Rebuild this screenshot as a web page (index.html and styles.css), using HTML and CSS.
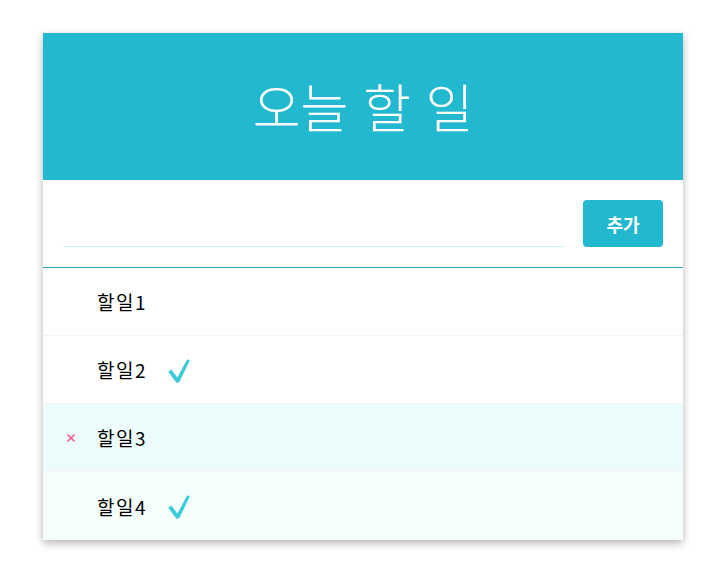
FILE: index.html
```html
<!DOCTYPE html>
<html lang="ko">
<head>
<meta charset="utf-8">
<title>오늘 할 일</title>
<link rel="stylesheet" href="styles.css">
</head>
<body>
<main class="page">
  <section class="todo">
    <header class="todo-title">오늘 할 일</header>
    <form class="todo-form">
      <input class="todo-input" type="text" value="">
      <button class="todo-add" type="button">추가</button>
    </form>
    <ul class="todo-list">
      <li class="todo-item">
        <span class="todo-remove"></span>
        <span class="todo-text">할일1</span>
      </li>
      <li class="todo-item">
        <span class="todo-remove"></span>
        <span class="todo-text">할일2</span>
        <svg class="todo-check" width="22" height="24" viewBox="0 0 22 24"><path d="M0.3 12.9 L3.2 10.6 L9.4 18.6 L19.2 0.3 L21.8 1.6 L11.2 23.2 L8.6 23.8 Z" fill="#3bc9db"/></svg>
      </li>
      <li class="todo-item is-hover">
        <span class="todo-remove"><svg width="8" height="8" viewBox="0 0 8 8"><path d="M0.5 0.5 L7.5 7.5 M7.5 0.5 L0.5 7.5" stroke="#f06595" stroke-width="1.6"/></svg></span>
        <span class="todo-text">할일3</span>
      </li>
      <li class="todo-item is-alt">
        <span class="todo-remove"></span>
        <span class="todo-text">할일4</span>
        <svg class="todo-check" width="22" height="24" viewBox="0 0 22 24"><path d="M0.3 12.9 L3.2 10.6 L9.4 18.6 L19.2 0.3 L21.8 1.6 L11.2 23.2 L8.6 23.8 Z" fill="#3bc9db"/></svg>
      </li>
    </ul>
  </section>
</main>
</body>
</html>
```

FILE: styles.css
```css
* { box-sizing: border-box; }
html, body { margin: 0; background: #ffffff; }
body { font-family: "Noto Sans CJK KR", "Noto Sans", sans-serif; color: #000; }
.page { padding: 33px 0 40px 43px; }
.todo {
  width: 640px;
  background: #ffffff;
  box-shadow: 0 3px 8px rgba(0, 0, 0, 0.3);
}
.todo-title {
  height: 147px;
  background: #22b8cf;
  color: #ffffff;
  font-size: 52px;
  font-weight: 300;
  display: flex;
  align-items: center;
  justify-content: center;
  line-height: 1;
  padding-bottom: 2px;
}
.todo-form {
  display: flex;
  gap: 19px;
  padding: 20px;
  border-bottom: 1px solid #26a6bb;
  margin: 0;
}
.todo-input {
  flex: 1;
  height: 47px;
  border: none;
  border-bottom: 1px solid #c5f6fa;
  outline: none;
  font-size: 18px;
  font-family: inherit;
  padding: 0 4px;
}
.todo-add {
  width: 80px;
  height: 47px;
  border: none;
  border-radius: 4px;
  background: #22b8cf;
  color: #ffffff;
  font-family: inherit;
  font-size: 18px;
  font-weight: 700;
  padding: 0;
}
.todo-list { list-style: none; margin: 0; padding: 0; }
.todo-item {
  height: 68px;
  display: flex;
  align-items: center;
  padding: 0 20px;
  border-top: 1px solid #f1f3f5;
  font-size: 19px;
}
.todo-item:first-child { border-top: none; height: 67px; }
.todo-item:last-child { height: 69px; }
.todo-item.is-hover { background: #ecfcfd; }
.todo-item.is-alt { background: #f4fffe; }
.todo-remove {
  width: 14px;
  margin-right: 20px;
  display: flex;
  justify-content: center;
  align-items: center;
}
.todo-remove svg { display: block; margin-left: 1px; }
.todo-text { line-height: 1; letter-spacing: 1.5px; }
.todo-check { margin-left: 21px; display: block; margin-top: 2px; }
```
